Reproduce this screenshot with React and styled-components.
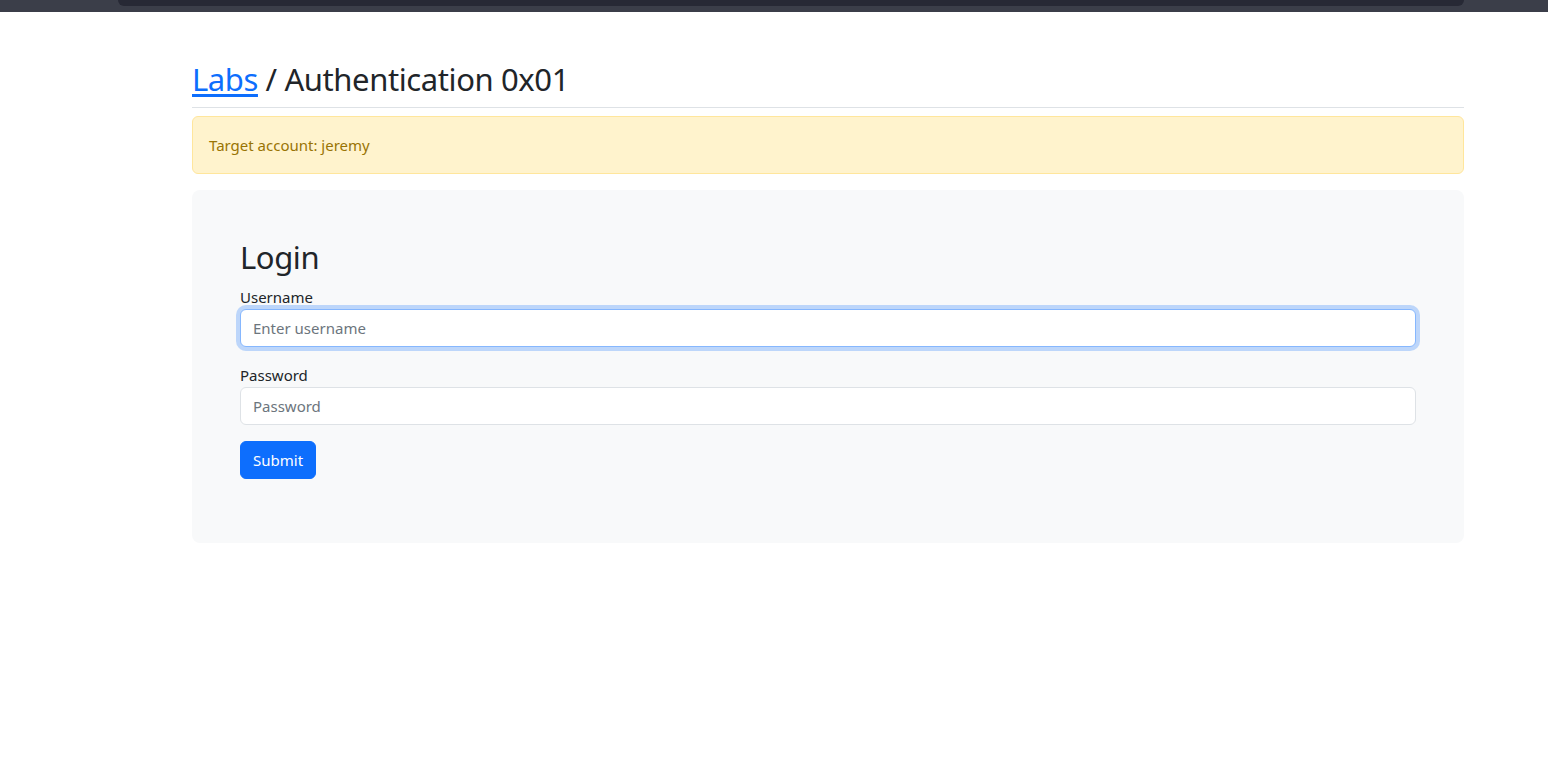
import React from 'react';
import styled, {createGlobalStyle} from 'styled-components';

const GlobalStyle = createGlobalStyle`
  * {
    box-sizing: border-box;
  }

  body {
    margin: 0;
    background: #fff;
    color: #212529;
    font-family: 'Noto Sans', 'Open Sans', sans-serif;
    font-size: 15px;
    line-height: 24px;
  }
`;

const TopStrip = styled.div`
  height: 12px;
  background: #3b3e49;
  padding: 0 84px 0 118px;
`;

const TopTab = styled.div`
  height: 6px;
  background: #272935;
  border-radius: 0 0 12px 12px;
`;

const Container = styled.main`
  width: 1272px;
  margin: 48px 0 0 192px;
`;

const Heading = styled.h2`
  margin: 0;
  font-size: 31px;
  font-weight: 400;
  letter-spacing: -0.4px;
  line-height: 39px;
`;

const Title = styled(Heading)`
  margin-bottom: 8px;
  padding-bottom: 8px;
  border-bottom: 1px solid #dee2e6;

  a {
    color: #0d6efd;
    text-decoration: underline;
    text-underline-offset: 3px;
  }
`;

const Alert = styled.div`
  padding: 16px;
  margin-bottom: 16px;
  border: 1px solid #ffe69c;
  border-radius: 6px;
  background: #fff3cd;
  color: #997404;
`;

const Card = styled.section`
  padding: 48px;
  border-radius: 8px;
  background: #f8f9fa;
`;

const CardTitle = styled(Heading)`
  margin-bottom: 8px;
`;

const Field = styled.div`
  margin-bottom: 16px;
`;

const Label = styled.label`
  display: block;
`;

const Input = styled.input`
  display: block;
  width: 100%;
  height: 38px;
  padding: 6px 12px;
  font: inherit;
  color: #212529;
  background: #fff;
  border: 1px solid ${(props) => (props.focused ? '#86b7fe' : '#dee2e6')};
  border-radius: 6px;
  outline: none;
  box-shadow: ${(props) =>
    props.focused ? '0 0 0 4px rgba(13, 110, 253, 0.25)' : 'none'};

  &::placeholder {
    color: #6c757d;
  }
`;

const SubmitButton = styled.button`
  height: 38px;
  padding: 6px 12px;
  font: inherit;
  color: #fff;
  background: #0d6efd;
  border: 1px solid #0d6efd;
  border-radius: 6px;
  cursor: pointer;
`;

export default function App() {
  return (
    <>
      <GlobalStyle />
      <TopStrip>
        <TopTab />
      </TopStrip>
      <Container>
        <Title>
          <a href="#labs">Labs</a> / Authentication 0x01
        </Title>
        <Alert>Target account: jeremy</Alert>
        <Card>
          <CardTitle>Login</CardTitle>
          <form onSubmit={(e) => e.preventDefault()}>
            <Field>
              <Label htmlFor="username">Username</Label>
              <Input id="username" placeholder="Enter username" focused />
            </Field>
            <Field>
              <Label htmlFor="password">Password</Label>
              <Input id="password" type="password" placeholder="Password" />
            </Field>
            <Field>
              <SubmitButton type="submit">Submit</SubmitButton>
            </Field>
          </form>
        </Card>
      </Container>
    </>
  );
}
